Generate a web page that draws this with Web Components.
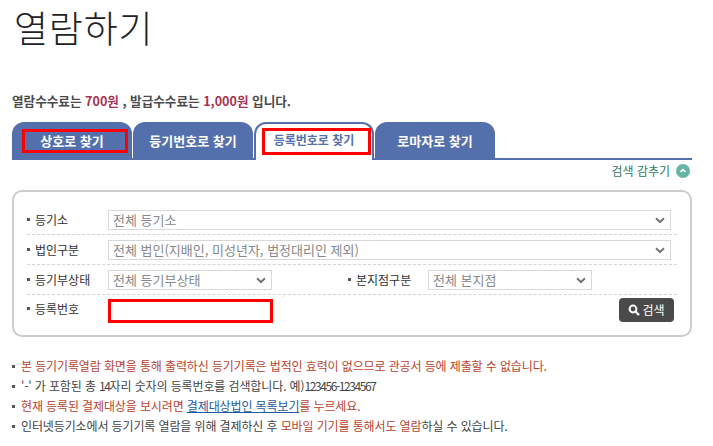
<!DOCTYPE html>
<html lang="ko">
<head>
<meta charset="utf-8">
<style>
  html, body { margin: 0; background: #fff; }
  body { font-family: "Noto Sans CJK KR", "Noto Sans", sans-serif; font-size: 12px; color: #444; }
</style>
</head>
<body>
<view-page></view-page>
<script>
const FONT = '"Noto Sans CJK KR", "Noto Sans", sans-serif';

class PageTitle extends HTMLElement {
  constructor() {
    super();
    this.attachShadow({ mode: "open" }).innerHTML = `
    <style>
      :host { display: block; height: 54px; padding-left: 2px; font: 300 37px/54px ${FONT}; letter-spacing: .8px; color: #222; }
    </style>
    <slot></slot>`;
  }
}
customElements.define("page-title", PageTitle);

class FeeNote extends HTMLElement {
  constructor() {
    super();
    this.attachShadow({ mode: "open" }).innerHTML = `
    <style>
      :host { display: block; margin-top: 38px; height: 18px; font: 700 12.6px/18px ${FONT}; color: #4a4a4a; white-space: nowrap; }
    </style>
    <slot></slot>`;
  }
}
customElements.define("fee-note", FeeNote);

class TabBar extends HTMLElement {
  constructor() {
    super();
    this.attachShadow({ mode: "open" }).innerHTML = `
    <style>
      :host { display: flex; gap: 1px; height: 36px; margin-top: 12px; border-bottom: 2px solid #5470ac; }
    </style>
    <slot></slot>`;
  }
}
customElements.define("tab-bar", TabBar);

class TabItem extends HTMLElement {
  constructor() {
    super();
    this.attachShadow({ mode: "open" }).innerHTML = `
    <style>
      :host {
        position: relative; box-sizing: border-box; display: flex; align-items: center; justify-content: center;
        width: 120px; height: 36px; border-radius: 12px 12px 0 0; background: #5470ac; color: #fff;
        font: 700 13px/1 ${FONT}; white-space: nowrap;
      }
      :host([active]) { height: 38px; background: #fff; color: #5470ac; border: 2px solid #5470ac; border-bottom: 0; padding-bottom: 4px; font-size: 12px; }
      .mark { display: none; position: absolute; border: 3px solid #f00; box-sizing: border-box; }
      :host([marked]) .mark { display: block; left: 10px; top: 7px; width: 106px; height: 24px; }
      :host([marked][active]) .mark { left: 6px; top: 4px; width: 109px; height: 27px; }
    </style>
    <slot></slot><span class="mark"></span>`;
  }
}
customElements.define("tab-item", TabItem);

class ToggleLink extends HTMLElement {
  constructor() {
    super();
    this.attachShadow({ mode: "open" }).innerHTML = `
    <style>
      :host { display: flex; justify-content: flex-end; align-items: center; gap: 6px; height: 22px; margin: 0 2px 8px 0; font: 400 12px/22px ${FONT}; color: #2f7a66; }
      svg { display: block; }
    </style>
    <span>검색 감추기</span>
    <svg width="14" height="14" viewBox="0 0 14 14"><circle cx="7" cy="7" r="7" fill="#66b5a6"/><path d="M4.5 8 7 5.6 9.5 8" fill="none" stroke="#fff" stroke-width="1.6"/></svg>`;
  }
}
customElements.define("toggle-link", ToggleLink);

class SearchPanel extends HTMLElement {
  constructor() {
    super();
    this.attachShadow({ mode: "open" }).innerHTML = `
    <style>
      :host { display: block; box-sizing: border-box; height: 147px; padding: 13px 13px 0 13px; border: 2px solid #ccc; border-radius: 10px; }
    </style>
    <slot></slot>`;
  }
}
customElements.define("search-panel", SearchPanel);

class FormRow extends HTMLElement {
  constructor() {
    super();
    this.attachShadow({ mode: "open" }).innerHTML = `
    <style>
      :host { display: flex; align-items: flex-start; box-sizing: border-box; height: 30px; padding-top: 5px; border-bottom: 1px dashed #d4d4d4; }
      :host([last]) { border-bottom: 0; height: 32px; padding-top: 4px; position: relative; }
    </style>
    <slot></slot>`;
  }
}
customElements.define("form-row", FormRow);

class FormLabel extends HTMLElement {
  constructor() {
    super();
    this.attachShadow({ mode: "open" }).innerHTML = `
    <style>
      :host { display: flex; align-items: center; gap: 5px; width: 81px; height: 19px; flex: none; font: 400 12px/19px ${FONT}; color: #333; white-space: nowrap; }
      i { width: 3px; height: 3px; background: #555; }
    </style>
    <i></i><slot></slot>`;
  }
}
customElements.define("form-label", FormLabel);

class FormSelect extends HTMLElement {
  constructor() {
    super();
    this.attachShadow({ mode: "open" }).innerHTML = `
    <style>
      :host { display: flex; align-items: center; justify-content: space-between; box-sizing: border-box; height: 20px; padding: 0 5px 0 4px; border: 1px solid #d8d8d8; font: 400 13px/18px ${FONT}; color: #888; white-space: nowrap; background: #fff; }
      svg { flex: none; }
    </style>
    <slot></slot>
    <svg width="10" height="7" viewBox="0 0 10 7"><path d="M1 1.2 5 5 9 1.2" fill="none" stroke="#777" stroke-width="2"/></svg>`;
  }
}
customElements.define("form-select", FormSelect);

class SearchButton extends HTMLElement {
  constructor() {
    super();
    this.attachShadow({ mode: "open" }).innerHTML = `
    <style>
      :host { position: absolute; right: 3px; top: 3px; display: flex; align-items: center; justify-content: center; gap: 2px; box-sizing: border-box; width: 55px; height: 24px; background: #4a4a4a; border-radius: 4px; color: #fff; font: 400 12px/24px ${FONT}; }
    </style>
    <svg width="12" height="12" viewBox="0 0 12 12"><circle cx="5" cy="5" r="3.4" fill="none" stroke="#fff" stroke-width="2"/><path d="M7.6 7.6 11 11" stroke="#fff" stroke-width="2.2"/></svg>
    <slot></slot>`;
  }
}
customElements.define("search-button", SearchButton);

class NoteList extends HTMLElement {
  constructor() {
    super();
    this.attachShadow({ mode: "open" }).innerHTML = `
    <style>
      :host { display: flex; flex-direction: column; margin-top: 19px; font: 400 12px/20px ${FONT}; color: #444; letter-spacing: -0.12px; }
    </style>
    <slot></slot>`;
  }
}
customElements.define("note-list", NoteList);

class NoteItem extends HTMLElement {
  constructor() {
    super();
    this.attachShadow({ mode: "open" }).innerHTML = `
    <style>
      :host { display: flex; align-items: center; gap: 6px; height: 20px; white-space: nowrap; }
      i { width: 3px; height: 3px; background: #555; flex: none; }
    </style>
    <i></i><span><slot></slot></span>`;
  }
}
customElements.define("note-item", NoteItem);

class ViewPage extends HTMLElement {
  constructor() {
    super();
    this.attachShadow({ mode: "open" }).innerHTML = `
    <style>
      :host { display: block; box-sizing: border-box; width: 692px; padding-left: 12px; }
      .red { color: #b8432f; }
      .fee { color: #a8324f; }
      .num { letter-spacing: -1.4px; }
      a { color: #1f5aa0; text-decoration: underline; }
      .inp { box-sizing: border-box; width: 165px; height: 24px; border: 3px solid #f00; background: #fff; }
      .grow { flex: 1; margin-right: 6px; }
      .half { width: 164px; flex: none; }
      .gap { width: 76px; flex: none; }
      .side { width: 80px; }
    </style>
    <page-title>열람하기</page-title>
    <fee-note>열람수수료는 <span class="fee">700원</span> , 발급수수료는 <span class="fee">1,000원</span> 입니다.</fee-note>
    <tab-bar>
      <tab-item marked>상호로 찾기</tab-item>
      <tab-item>등기번호로 찾기</tab-item>
      <tab-item active marked>등록번호로 찾기</tab-item>
      <tab-item>로마자로 찾기</tab-item>
    </tab-bar>
    <toggle-link></toggle-link>
    <search-panel>
      <form-row><form-label>등기소</form-label><form-select class="grow">전체 등기소</form-select></form-row>
      <form-row><form-label>법인구분</form-label><form-select class="grow">전체 법인(지배인, 미성년자, 법정대리인 제외)</form-select></form-row>
      <form-row><form-label>등기부상태</form-label><form-select class="half">전체 등기부상태</form-select><span class="gap"></span><form-label class="side">본지점구분</form-label><form-select class="half">전체 본지점</form-select></form-row>
      <form-row last><form-label>등록번호</form-label><div class="inp"></div><search-button>검색</search-button></form-row>
    </search-panel>
    <note-list>
      <note-item><span class="red">본 등기기록열람 화면을 통해 출력하신 등기기록은 법적인 효력이 없으므로 관공서 등에 제출할 수 없습니다.</span></note-item>
      <note-item>'-' 가 포함된 총 <span class="num">14</span>자리 숫자의 등록번호를 검색합니다. 예)<span class="num">123456-1234567</span></note-item>
      <note-item><span class="red">현재 등록된 결제대상을 보시려면</span> <a>결제대상법인 목록보기</a><span class="red">를 누르세요.</span></note-item>
      <note-item>인터넷등기소에서 등기기록 열람을 위해 결제하신 후 <span class="red">모바일 기기를 통해서도 열람</span>하실 수 있습니다.</note-item>
    </note-list>`;
  }
}
customElements.define("view-page", ViewPage);
</script>
</body>
</html>
